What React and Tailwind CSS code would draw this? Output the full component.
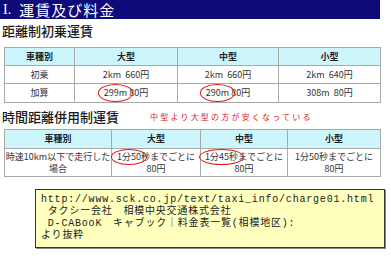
const cjk = { fontFamily: '"Noto Sans CJK JP", "Noto Sans", sans-serif' };
const mono = { fontFamily: '"Liberation Mono", "Noto Sans CJK JP", monospace' };

function Circled({ children }) {
  return (
    <span className="relative inline-block">
      {children}
      <span className="absolute -left-[6px] -right-[6px] -top-[2px] -bottom-[2px] rounded-[50%] border-[1.5px] border-[#e01818]" />
    </span>
  );
}

function Th({ children }) {
  return (
    <th className="border border-[#a9a9a9] bg-[#cdf6fc] text-[9px] font-bold text-[#222] p-0">
      {children}
    </th>
  );
}

function Td({ children, className = "" }) {
  return (
    <td className={`border border-[#a9a9a9] bg-white text-[9px] text-[#333] text-center p-0 ${className}`}>
      {children}
    </td>
  );
}

export default function App() {
  return (
    <div className="w-[391px] h-[263px] bg-white overflow-hidden flex flex-col" style={cjk}>
      <div className="w-[380px] h-[19px] bg-[#0e0a7a] flex items-center pl-[3px] text-white text-[15px] leading-none">
        <span style={{ fontFamily: '"Liberation Serif", serif' }} className="mr-[8px] text-[14px]">I.</span>
        <span className="tracking-[1px]">運賃及び料金</span>
      </div>

      <div className="pt-[4px] pl-[2px] text-[13px] leading-[16px] text-[#1a1a1a] font-medium">
        距離制初乗運賃
      </div>

      <table className="mt-[8px] ml-[4px] w-[376px] table-fixed border-collapse">
        <colgroup>
          <col className="w-[70px]" />
          <col className="w-[103px]" />
          <col className="w-[101px]" />
          <col className="w-[102px]" />
        </colgroup>
        <thead>
          <tr className="h-[18px]">
            <Th>車種別</Th>
            <Th>大型</Th>
            <Th>中型</Th>
            <Th>小型</Th>
          </tr>
        </thead>
        <tbody>
          <tr className="h-[18px]">
            <Td>初乗</Td>
            <Td>2km&nbsp;&nbsp;660円</Td>
            <Td>2km&nbsp;&nbsp;660円</Td>
            <Td>2km&nbsp;&nbsp;640円</Td>
          </tr>
          <tr className="h-[19px]">
            <Td>加算</Td>
            <Td>
              <Circled>299m</Circled>&nbsp;80円
            </Td>
            <Td>
              <Circled>290m</Circled>&nbsp;80円
            </Td>
            <Td>308m&nbsp;&nbsp;80円</Td>
          </tr>
        </tbody>
      </table>

      <div className="flex items-center pt-[6px]">
        <div className="pl-[2px] text-[13px] leading-[16px] text-[#1a1a1a] font-medium w-[150px]">時間距離併用制運賃</div>
        <div className="text-[8px] tracking-[2.2px] text-[#e01818]">中型より大型の方が安くなっている</div>
      </div>

      <table className="mt-[4px] ml-[4px] w-[376px] table-fixed border-collapse">
        <colgroup>
          <col className="w-[107px]" />
          <col className="w-[89px]" />
          <col className="w-[87px]" />
          <col className="w-[93px]" />
        </colgroup>
        <thead>
          <tr className="h-[19px]">
            <Th>車種別</Th>
            <Th>大型</Th>
            <Th>中型</Th>
            <Th>小型</Th>
          </tr>
        </thead>
        <tbody>
          <tr className="h-[28px]">
            <Td className="leading-[12px] whitespace-nowrap">
              時速10km以下で走行した
              <br />
              場合
            </Td>
            <Td className="leading-[12px] whitespace-nowrap">
              <Circled>1分50</Circled>秒までごとに
              <br />
              80円
            </Td>
            <Td className="leading-[12px] whitespace-nowrap">
              <Circled>1分45秒</Circled>までごとに
              <br />
              80円
            </Td>
            <Td className="leading-[12px] whitespace-nowrap">
              1分50秒までごとに
              <br />
              80円
            </Td>
          </tr>
        </tbody>
      </table>

      <div
        className="mt-[12px] ml-[35px] w-[350px] h-[59px] bg-[#ffffbe] border border-[#333] shadow-[1px_1px_0_#888] pt-[4px] pl-[5px] text-[10px] leading-[12px] tracking-[0.8px] text-[#222] whitespace-pre"
        style={mono}
      >
        <div>http://www.sck.co.jp/text/taxi_info/charge01.html</div>
        <div> タクシー会社　相模中央交通株式会社</div>
        <div> D-CABooK　キャブック｜料金表一覧(相模地区):</div>
        <div>より抜粋</div>
      </div>
    </div>
  );
}
